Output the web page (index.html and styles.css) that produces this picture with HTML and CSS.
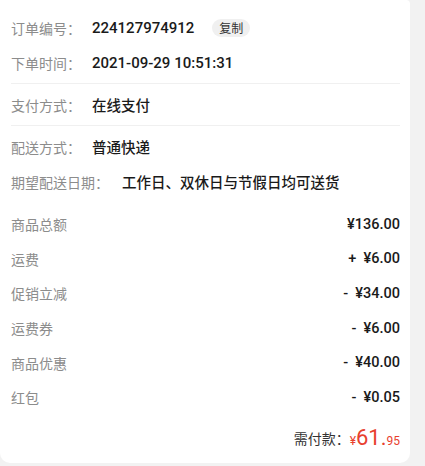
FILE: index.html
```html
<!DOCTYPE html>
<html lang="zh-CN">
<head>
    <meta charset="UTF-8">
    <meta name="viewport" content="width=device-width, initial-scale=1.0">
    <title>订单详情</title>
    <link rel="stylesheet" href="styles.css">
</head>
<body>
    <div class="cartao">
        <div class="secao primeira">
            <div class="linha">
                <span class="rotulo">订单编号：</span>
                <span class="valor num">224127974912</span>
                <span class="copiar">复制</span>
            </div>
            <div class="linha">
                <span class="rotulo">下单时间：</span>
                <span class="valor num">2021-09-29 10:51:31</span>
            </div>
        </div>

        <div class="secao">
            <div class="linha">
                <span class="rotulo">支付方式：</span>
                <span class="valor">在线支付</span>
            </div>
        </div>

        <div class="secao sem-borda">
            <div class="linha">
                <span class="rotulo">配送方式：</span>
                <span class="valor">普通快递</span>
            </div>
            <div class="linha">
                <span class="rotulo longo">期望配送日期：</span>
                <span class="valor">工作日、双休日与节假日均可送货</span>
            </div>
        </div>

        <div class="valores">
            <div class="linha-valor"><span>商品总额</span><span class="preco">¥136.00</span></div>
            <div class="linha-valor"><span>运费</span><span class="preco">+&nbsp; ¥6.00</span></div>
            <div class="linha-valor"><span>促销立减</span><span class="preco">-&nbsp; ¥34.00</span></div>
            <div class="linha-valor"><span>运费券</span><span class="preco">-&nbsp; ¥6.00</span></div>
            <div class="linha-valor"><span>商品优惠</span><span class="preco">-&nbsp; ¥40.00</span></div>
            <div class="linha-valor"><span>红包</span><span class="preco">-&nbsp; ¥0.05</span></div>
        </div>

        <div class="total">
            <span class="total-rotulo">需付款：</span>
            <span class="total-preco"><small>¥</small><b>61.</b><small>95</small></span>
        </div>
    </div>
</body>
</html>
```

FILE: styles.css
```css
* {
    margin: 0;
    padding: 0;
    box-sizing: border-box;
}

body {
    font-family: "Noto Sans CJK SC", "Noto Sans", sans-serif;
    background-color: #f2f2f2;
    width: 425px;
    height: 466px;
    overflow: hidden;
}

.cartao {
    width: 410px;
    height: 463px;
    background-color: #fff;
    border-radius: 0 4px 10px 10px;
    padding: 0 10px 0 11px;
}

.secao {
    padding: 3px 0;
    border-bottom: 1px solid #f0f0f0;
}

.secao.primeira {
    padding-top: 10px;
}

.secao.sem-borda {
    border-bottom: none;
}

.linha {
    height: 35px;
    display: flex;
    align-items: center;
}

.rotulo {
    font-size: 14px;
    color: #8c8c8c;
    width: 81px;
    flex-shrink: 0;
}

.rotulo.longo {
    width: 111px;
}

.valor {
    font-size: 14.5px;
    color: #1a1a1a;
    font-weight: 500;
}

.num {
    font-family: "Roboto", "Noto Sans CJK SC", sans-serif;
    font-size: 15px;
}

.copiar {
    margin-left: 18px;
    font-size: 12px;
    color: #333;
    background-color: #f0f0f0;
    border-radius: 9px;
    padding: 1px 7px;
    line-height: 16px;
}

.valores {
    padding-top: 5px;
}

.linha-valor {
    height: 34.6px;
    display: flex;
    justify-content: space-between;
    align-items: center;
    font-size: 14px;
    color: #8c8c8c;
}

.preco {
    font-family: "Roboto", sans-serif;
    font-weight: 500;
    font-size: 14.5px;
    color: #1a1a1a;
}

.total {
    height: 44px;
    display: flex;
    justify-content: flex-end;
    align-items: center;
    padding-top: 2px;
}

.total-rotulo {
    font-size: 14px;
    color: #333;
}

.total-preco {
    color: #e8402e;
    font-family: "Roboto", sans-serif;
}

.total-preco small {
    font-size: 12px;
}

.total-preco b {
    font-weight: 400;
    font-size: 22px;
}
```
